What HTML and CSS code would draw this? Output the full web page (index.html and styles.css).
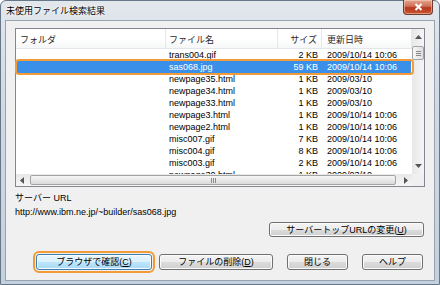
FILE: index.html
```html
<!DOCTYPE HTML>
<html lang="ja">
<head>
    <meta charset="UTF-8">
    <title>未使用ファイル検索結果</title>
    <link rel="stylesheet" href="styles.css">
</head>
<body>
    <div class="window">
        <div class="titlebar">
            <span class="title">未使用ファイル検索結果</span>
            <button class="close-btn">
                <svg width="11" height="8" viewBox="0 0 11 8"><path d="M2.5 1 L8.5 7 M8.5 1 L2.5 7" stroke="#fff" stroke-width="2"/></svg>
            </button>
        </div>
        <div class="client">
            <div class="listview">
                <div class="list-main">
                    <div class="list-row list-header">
                        <div class="col-folder">フォルダ</div>
                        <div class="col-name">ファイル名</div>
                        <div class="col-size">サイズ</div>
                        <div class="col-date">更新日時</div>
                    </div>
                    <div class="list-body">
                        <div class="list-row">
                            <div class="col-folder"></div><div class="col-name">trans004.gif</div><div class="col-size">2 KB</div><div class="col-date">2009/10/14 10:06</div>
                        </div>
                        <div class="list-row selected">
                            <div class="col-folder"></div><div class="col-name">sas068.jpg</div><div class="col-size">59 KB</div><div class="col-date">2009/10/14 10:06</div>
                        </div>
                        <div class="list-row">
                            <div class="col-folder"></div><div class="col-name">newpage35.html</div><div class="col-size">1 KB</div><div class="col-date">2009/03/10</div>
                        </div>
                        <div class="list-row">
                            <div class="col-folder"></div><div class="col-name">newpage34.html</div><div class="col-size">1 KB</div><div class="col-date">2009/03/10</div>
                        </div>
                        <div class="list-row">
                            <div class="col-folder"></div><div class="col-name">newpage33.html</div><div class="col-size">1 KB</div><div class="col-date">2009/03/10</div>
                        </div>
                        <div class="list-row">
                            <div class="col-folder"></div><div class="col-name">newpage3.html</div><div class="col-size">1 KB</div><div class="col-date">2009/10/14 10:06</div>
                        </div>
                        <div class="list-row">
                            <div class="col-folder"></div><div class="col-name">newpage2.html</div><div class="col-size">1 KB</div><div class="col-date">2009/10/14 10:06</div>
                        </div>
                        <div class="list-row">
                            <div class="col-folder"></div><div class="col-name">misc007.gif</div><div class="col-size">7 KB</div><div class="col-date">2009/10/14 10:06</div>
                        </div>
                        <div class="list-row">
                            <div class="col-folder"></div><div class="col-name">misc004.gif</div><div class="col-size">8 KB</div><div class="col-date">2009/10/14 10:06</div>
                        </div>
                        <div class="list-row">
                            <div class="col-folder"></div><div class="col-name">misc003.gif</div><div class="col-size">2 KB</div><div class="col-date">2009/10/14 10:06</div>
                        </div>
                        <div class="list-row">
                            <div class="col-folder"></div><div class="col-name">newpage30.html</div><div class="col-size">1 KB</div><div class="col-date">2009/03/10</div>
                        </div>
                    </div>
                </div>
                <div class="vscroll">
                    <div class="sb-btn">
                        <svg width="7" height="4" viewBox="0 0 7 4"><path d="M0 4 L3.5 0 L7 4 Z" fill="#555"/></svg>
                    </div>
                    <div class="vthumb"><span class="grip-h"></span></div>
                    <div class="vtrack"></div>
                    <div class="sb-btn">
                        <svg width="7" height="4" viewBox="0 0 7 4"><path d="M0 0 L3.5 4 L7 0 Z" fill="#555"/></svg>
                    </div>
                </div>
                <div class="hscroll">
                    <div class="sb-btn">
                        <svg width="4" height="7" viewBox="0 0 4 7"><path d="M4 0 L0 3.5 L4 7 Z" fill="#555"/></svg>
                    </div>
                    <div class="hthumb"><span class="grip-v"></span></div>
                    <div class="sb-btn">
                        <svg width="4" height="7" viewBox="0 0 4 7"><path d="M0 0 L4 3.5 L0 7 Z" fill="#555"/></svg>
                    </div>
                </div>
                <div class="corner"></div>
                <div class="focus-mark"></div>
            </div>

            <div class="server-label">サーバー URL</div>
            <div class="server-url">http://www.ibm.ne.jp/~builder/sas068.jpg</div>

            <div class="url-actions">
                <button class="btn btn-wide">サーバートップURLの変更(<u>U</u>)</button>
            </div>

            <div class="actions">
                <button class="btn btn-browse">ブラウザで確認(<u>C</u>)</button>
                <button class="btn btn-delete">ファイルの削除(<u>D</u>)</button>
                <button class="btn btn-small">閉じる</button>
                <button class="btn btn-small">ヘルプ</button>
            </div>
        </div>
    </div>
</body>
</html>
```

FILE: styles.css
```css
html, body {
    margin: 0;
    height: 100%;
}

body {
    font-family: "Liberation Sans", "Noto Sans CJK JP", sans-serif;
    font-size: 9px;
    color: #000;
    background-color: #fff;
}

.window {
    width: 440px;
    height: 285px;
    box-sizing: border-box;
    border: 1px solid #66778a;
    border-radius: 6px 6px 0 0;
    padding: 0 4px 3px;
    display: flex;
    flex-direction: column;
    background: linear-gradient(to bottom, #e2e7ec 0%, #d3dbe3 30%, #c3d0dd 100%);
}

.titlebar {
    height: 19px;
    display: flex;
    align-items: flex-start;
}

.title {
    padding: 3px 0 0 1px;
    line-height: 14px;
    text-shadow: 0 0 4px #fff, 0 0 2px #fff;
}

.close-btn {
    margin: -1px 2px 0 auto;
    width: 30px;
    height: 15px;
    padding: 0;
    border: 1px solid #6d3b33;
    border-top: none;
    border-radius: 0 0 4px 4px;
    background: linear-gradient(to bottom, #e4a590 0%, #cf6f57 45%, #b7371f 55%, #c8552f 100%);
    box-shadow: inset 0 0 0 1px rgba(255, 220, 200, 0.5);
    display: flex;
    align-items: center;
    justify-content: center;
}

.client {
    flex: 1;
    border: 1px solid #97a3b0;
    background-color: #f0f0f0;
    padding: 7px 9px 0;
}

.listview {
    position: relative;
    height: 159px;
    box-sizing: border-box;
    border: 1px solid #828790;
    background-color: #fff;
    display: grid;
    grid-template-columns: 1fr 12px;
    grid-template-rows: 1fr 12px;
}

.list-main {
    display: flex;
    flex-direction: column;
    overflow: hidden;
}

.list-row {
    display: grid;
    grid-template-columns: 150px 112px 44px 1fr;
    height: 12px;
    line-height: 12px;
    margin: 0 1px 0 0;
    white-space: nowrap;
}

.list-header {
    height: 20px;
    box-sizing: border-box;
    line-height: 14px;
    padding-top: 4px;
    border-bottom: 1px solid #e3e6ea;
    background: linear-gradient(to bottom, #fff 0%, #fff 50%, #f6f7f8 100%);
    color: #2a2a2a;
    margin: 0;
}

.list-header > div {
    border-right: 1px solid #e6e9ec;
    margin-top: -4px;
    padding-top: 4px;
}

.list-body {
    flex: 1;
    overflow: hidden;
}

.col-folder {
    padding-left: 4px;
}

.col-name {
    padding-left: 3px;
}

.col-size {
    text-align: right;
    padding-right: 4px;
}

.col-date {
    padding-left: 5px;
}

.list-row.selected {
    margin-left: 1px;
    grid-template-columns: 149px 112px 44px 1fr;
    background-color: #3a8fe8;
    color: #fff;
}

.focus-mark {
    position: absolute;
    left: -1px;
    top: 30px;
    width: 399px;
    height: 16px;
    box-sizing: border-box;
    border: 2px solid #f39b37;
    border-radius: 4px;
}

.vscroll {
    display: flex;
    flex-direction: column;
    background: linear-gradient(to right, #e8e8e8, #f5f5f5);
}

.hscroll {
    display: flex;
    align-items: stretch;
    background: linear-gradient(to bottom, #e8e8e8, #f5f5f5);
}

.corner {
    background-color: #f0f0f0;
}

.sb-btn {
    flex: 0 0 12px;
    display: flex;
    align-items: center;
    justify-content: center;
}

.vscroll .sb-btn {
    height: 16px;
    flex-basis: 16px;
}

.vthumb {
    height: 12px;
    margin: 1px 0;
    border: 1px solid #a4a4a4;
    border-radius: 2px;
    background: linear-gradient(to right, #f7f7f7, #dedede);
    display: flex;
    align-items: center;
    justify-content: center;
}

.vtrack {
    flex: 1;
}

.hthumb {
    flex: 1;
    margin: 1px 4px 1px 2px;
    border: 1px solid #a4a4a4;
    border-radius: 2px;
    background: linear-gradient(to bottom, #f7f7f7, #dadada);
    display: flex;
    align-items: center;
    justify-content: center;
}

.grip-h {
    width: 5px;
    height: 5px;
    background: repeating-linear-gradient(to bottom, #8a8a8a 0, #8a8a8a 1px, transparent 1px, transparent 2px);
}

.grip-v {
    width: 5px;
    height: 5px;
    background: repeating-linear-gradient(to right, #8a8a8a 0, #8a8a8a 1px, transparent 1px, transparent 2px);
}

.server-label {
    margin-top: 4px;
    line-height: 14px;
}

.server-url {
    line-height: 14px;
}

.url-actions {
    display: flex;
    justify-content: flex-end;
    margin-top: 3px;
    padding-right: 1px;
}

.actions {
    display: flex;
    margin-top: 17px;
    padding-left: 21px;
    gap: 14px;
}

.btn {
    height: 16px;
    padding: 0;
    font: inherit;
    color: #000;
    line-height: 14px;
    border: 1px solid #707070;
    border-radius: 3px;
    background: linear-gradient(to bottom, #f4f4f4 0%, #ececec 50%, #dcdcdc 51%, #cfcfcf 100%);
    box-shadow: inset 0 0 0 1px #fbfbfb;
}

.btn u {
    text-underline-offset: 1px;
}

.btn-wide {
    width: 155px;
    height: 15px;
}

.btn-browse {
    width: 116px;
    margin-right: -7px;
    border-color: #3c7fb1;
    background: linear-gradient(to bottom, #eaf6fd 0%, #d9f0fc 50%, #bee6fd 51%, #a7d9f5 100%);
    outline: 2px solid #f39b37;
    outline-offset: 1px;
}

.btn-delete {
    width: 114px;
}

.btn-small {
    width: 61px;
}
```
